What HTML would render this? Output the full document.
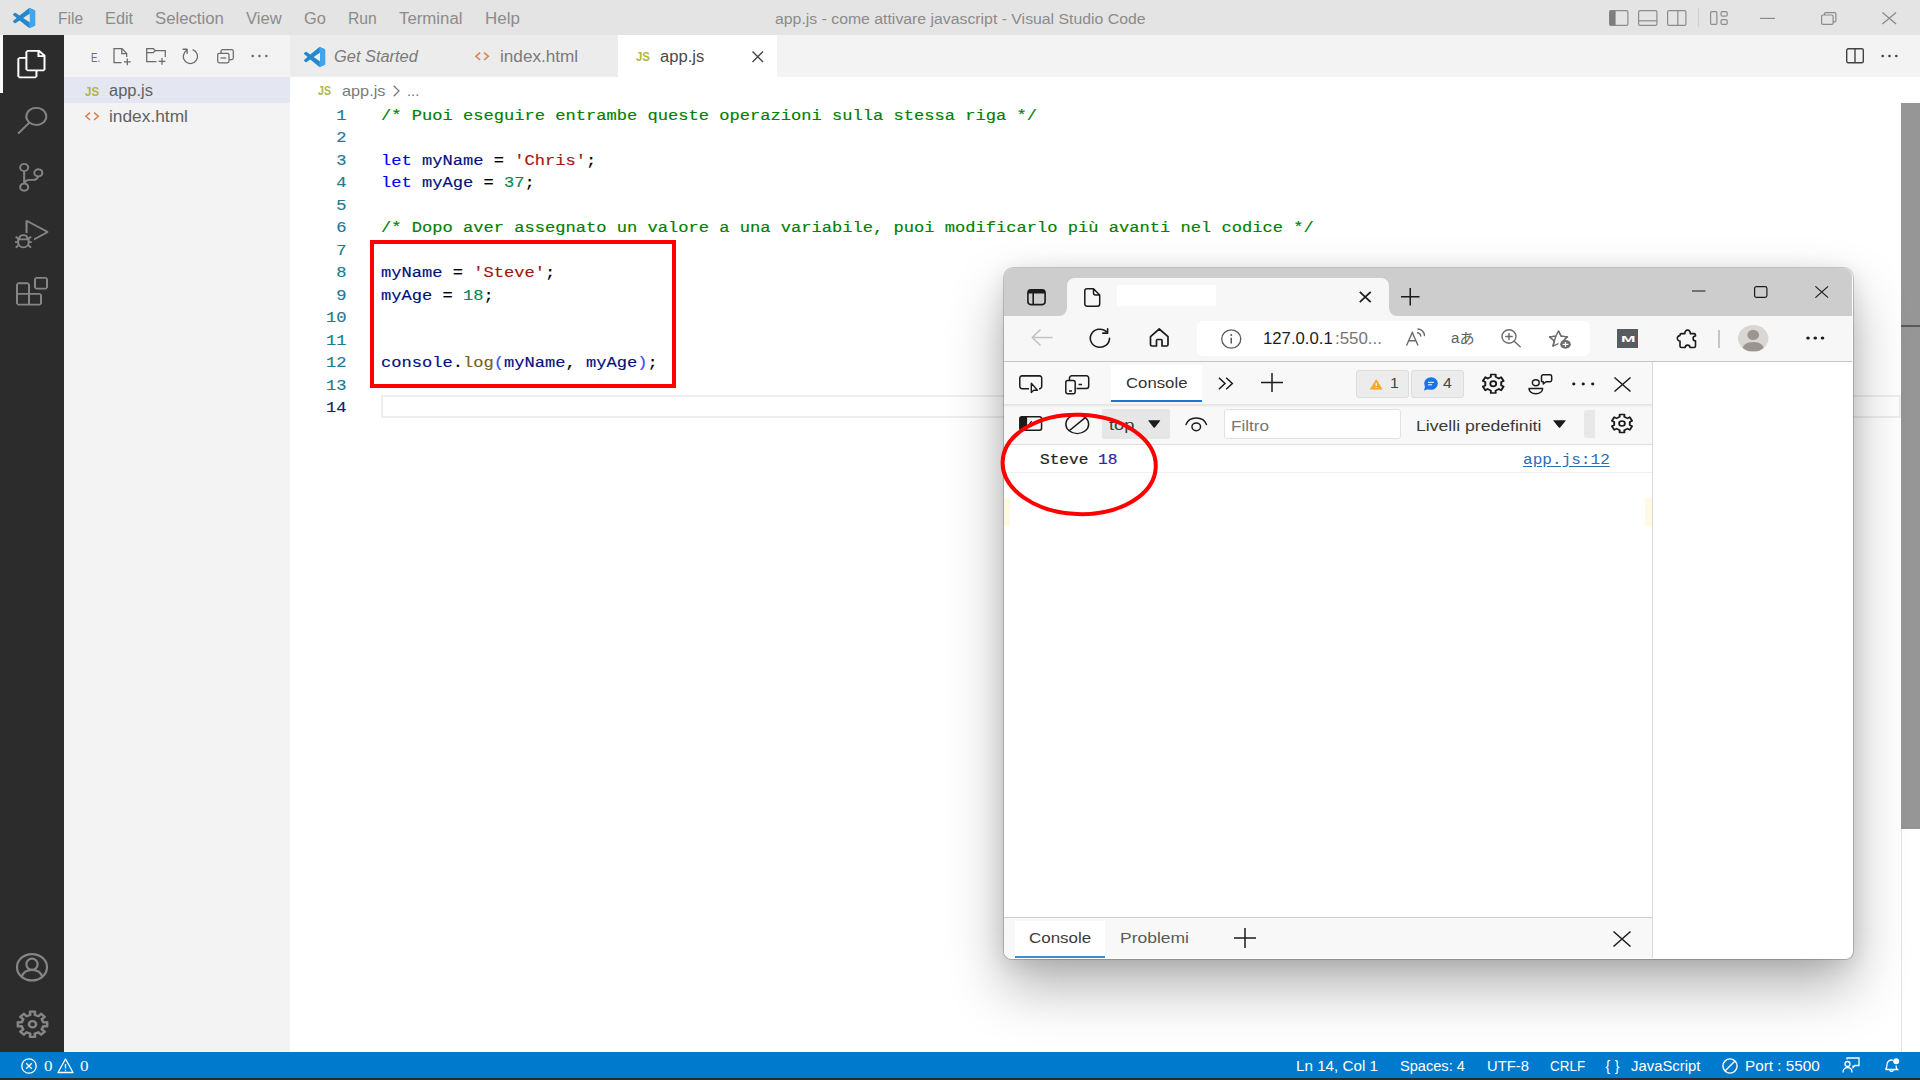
<!DOCTYPE html>
<html lang="it">
<head>
<meta charset="utf-8">
<title>app.js - come attivare javascript - Visual Studio Code</title>
<style>
*{box-sizing:border-box;margin:0;padding:0}
html,body{width:1920px;height:1080px;overflow:hidden;background:#fff}
body{position:relative;font-family:"Liberation Sans",sans-serif;color:#616161}
.abs{position:absolute}
.t{position:absolute;white-space:nowrap;line-height:1;transform-origin:0 50%}
svg{position:absolute;overflow:visible}
/* ---------- VS Code ---------- */
#titlebar{left:0;top:0;width:1920px;height:35px;background:#e4e4e4}
#titlebar .t{font-size:15.6px;color:#8b8b8b;top:10.7px}
#activity{left:0;top:35px;width:64px;height:1017px;background:#2c2c2c}
#sidebar{left:64px;top:35px;width:226px;height:1017px;background:#f3f3f3}
#tabs{left:290px;top:35px;width:1630px;height:42px;background:#f3f3f3}
#tabs:before{content:"";position:absolute;left:0;top:0;width:328px;height:42px;background:#f0f0f0}
.tab{position:absolute;top:0;height:42px;background:#ececec}
.tab.act{background:#fff}
#status{left:0;top:1052px;width:1920px;height:26px;background:#007acc}
#status .t{color:#fff;font-size:14px;top:7px}
#botstrip{left:0;top:1078px;width:1920px;height:2px;background:#2a2a2a}
/* code */
#code{left:290px;top:102.75px;width:1611px;height:950px}
.ln{position:absolute;margin-top:1.8px;-webkit-text-stroke:0.15px;left:0;width:56.5px;text-align:right;height:22.5px;line-height:22.5px;font-family:"Liberation Mono",monospace;font-size:14.5px;transform:scaleX(1.178);transform-origin:100% 50%;color:#237893;white-space:pre}
.cl{position:absolute;margin-top:1.8px;-webkit-text-stroke:0.15px;left:91px;height:22.5px;line-height:22.5px;font-family:"Liberation Mono",monospace;font-size:14.5px;transform:scaleX(1.178);transform-origin:0 50%;color:#000;white-space:pre}
.c{color:#008000}.k{color:#0000ff}.v{color:#001080}.s{color:#a31515}.n{color:#098658}.f{color:#795e26}.p{color:#2f55ee}
</style>
</head>
<body>
<!-- ================= TITLE BAR ================= -->
<div id="titlebar" class="abs">
  <span class="t" id="m1" style="left:57.6px;transform:scaleX(0.998)">File</span>
  <span class="t" id="m2" style="left:105.2px;transform:scaleX(1.046)">Edit</span>
  <span class="t" id="m3" style="left:155.2px;transform:scaleX(1.072)">Selection</span>
  <span class="t" id="m4" style="left:246.3px;transform:scaleX(1.065)">View</span>
  <span class="t" id="m5" style="left:303.7px;transform:scaleX(1.052)">Go</span>
  <span class="t" id="m6" style="left:348.0px;transform:scaleX(1.007)">Run</span>
  <span class="t" id="m7" style="left:398.8px;transform:scaleX(1.077)">Terminal</span>
  <span class="t" id="m8" style="left:484.8px;transform:scaleX(1.088)">Help</span>
  <span class="t" id="wtitle" style="left:774.5px;font-size:15.2px;transform:scaleX(1.041)">app.js - come attivare javascript - Visual Studio Code</span>
</div>
<!-- ================= ACTIVITY BAR ================= -->
<div id="activity" class="abs">
  <div class="abs" style="left:0;top:0;width:2.600px;height:57.500px;background:#fbfbfb"></div>
</div>
<!-- ================= SIDE BAR ================= -->
<div id="sidebar" class="abs">
  <div class="abs" style="left:0;top:42.300px;width:226px;height:25.500px;background:#e4e6f1"></div>
  <span class="t" id="sbE" style="left:27.2px;top:15.500px;font-size:13px;color:#6f6f6f;transform:scaleX(0.740)">E.</span>
  <span class="t" id="f1i" style="left:21.2px;top:49.8px;font-size:13.4px;font-weight:bold;color:#afb541;transform:scaleX(0.860)">JS</span>
  <span class="t" id="f1" style="left:45.0px;top:47.8px;font-size:15.6px;color:#616161;transform:scaleX(1.057)">app.js</span>
  <svg style="left:21.400px;top:77.300px;width:14.200px;height:8.600px" viewBox="0 0 14.5 9.5" preserveAspectRatio="none"><path d="M5.2 0.700L0.900 4.750L5.200 8.800M9.300 0.700L13.600 4.750L9.300 8.800" fill="none" stroke="#d9814f" stroke-width="1.600"/></svg>
  <span class="t" id="f2" style="left:45.0px;top:73.6px;font-size:15.6px;color:#616161;transform:scaleX(1.111)">index.html</span>
</div>
<!-- ================= TABS ================= -->
<div id="tabs" class="abs">
  <div class="tab" style="left:0;width:165.500px"></div>
  <div class="tab" style="left:166px;width:161.500px"></div>
  <div class="tab act" style="left:328px;width:159px"></div>
  <span class="t" id="tb1" style="left:43.7px;top:13.6px;font-size:16px;font-style:italic;color:#7a7a7a;transform:scaleX(1.025)">Get Started</span>
  <svg style="left:185px;top:16.600px;width:14.200px;height:8.600px" viewBox="0 0 14.5 9.5" preserveAspectRatio="none"><path d="M5.2 0.700L0.900 4.750L5.200 8.800M9.300 0.700L13.600 4.750L9.300 8.800" fill="none" stroke="#d9814f" stroke-width="1.600"/></svg>
  <span class="t" id="tb2" style="left:209.6px;top:13.6px;font-size:16px;color:#7a7a7a;transform:scaleX(1.072)">index.html</span>
  <span class="t" id="tb3i" style="left:346.0px;top:14.6px;font-size:13.4px;font-weight:bold;color:#afb541;transform:scaleX(0.854)">JS</span>
  <span class="t" id="tb3" style="left:369.8px;top:13.6px;font-size:16px;color:#4a4a4a;transform:scaleX(1.035)">app.js</span>
</div>
<!-- breadcrumb -->
<span class="t" id="bc1i" style="left:318.0px;top:85px;font-size:12.6px;font-weight:bold;color:#afb541;transform:scaleX(0.844)">JS</span>
<span class="t" id="bc1" style="left:341.6px;top:83.9px;font-size:14.8px;color:#7a7a7a;transform:scaleX(1.099)">app.js</span>
<span class="t" id="bc2" style="left:407px;top:83.9px;font-size:14.8px;color:#7a7a7a">...</span>
<!-- ================= CODE ================= -->
<div id="code" class="abs">
  <div class="abs" style="left:91px;top:292.5px;width:1520px;height:22.5px;border:2px solid #eeeeee"></div>
  <div class="ln" style="top:0">1</div><div class="cl" style="top:0"><span class="c">/* Puoi eseguire entrambe queste operazioni sulla stessa riga */</span></div>
  <div class="ln" style="top:22.5px">2</div>
  <div class="ln" style="top:45px">3</div><div class="cl" style="top:45px"><span class="k">let</span> <span class="v">myName</span> = <span class="s">'Chris'</span>;</div>
  <div class="ln" style="top:67.5px">4</div><div class="cl" style="top:67.5px"><span class="k">let</span> <span class="v">myAge</span> = <span class="n">37</span>;</div>
  <div class="ln" style="top:90px">5</div>
  <div class="ln" style="top:112.5px">6</div><div class="cl" style="top:112.5px"><span class="c">/* Dopo aver assegnato un valore a una variabile, puoi modificarlo più avanti nel codice */</span></div>
  <div class="ln" style="top:135px">7</div>
  <div class="ln" style="top:157.5px">8</div><div class="cl" style="top:157.5px"><span class="v">myName</span> = <span class="s">'Steve'</span>;</div>
  <div class="ln" style="top:180px">9</div><div class="cl" style="top:180px"><span class="v">myAge</span> = <span class="n">18</span>;</div>
  <div class="ln" style="top:202.5px">10</div>
  <div class="ln" style="top:225px">11</div>
  <div class="ln" style="top:247.5px">12</div><div class="cl" style="top:247.5px"><span class="v">console</span>.<span class="f">log</span><span class="p">(</span><span class="v">myName</span>, <span class="v">myAge</span><span class="p">)</span>;</div>
  <div class="ln" style="top:270px">13</div>
  <div class="ln" style="top:292.5px;color:#0b216f">14</div>
  <!-- red annotation box -->
  <div class="abs" style="left:80px;top:137.5px;width:306px;height:148px;border:4px solid #ff0000"></div>
</div>
<!-- scrollbar -->
<div class="abs" style="left:1901px;top:77px;width:19px;height:975px;background:#fff"></div>
<div class="abs" style="left:1901px;top:829px;width:1px;height:223px;background:#e4e4e4"></div>
<div class="abs" style="left:1901px;top:103px;width:19px;height:726px;background:#969696"></div>
<div class="abs" style="left:1901px;top:325px;width:19px;height:2px;background:#5a5a5a"></div>
<!-- ================= STATUS BAR ================= -->
<div id="status" class="abs">
  <span class="t" id="s1" style="left:43.7px;font-family:'Liberation Serif',serif;font-size:15.500px;top:6px;transform:scaleX(1.1)">0</span>
  <span class="t" id="s2" style="left:79.7px;font-family:'Liberation Serif',serif;font-size:15.500px;top:6px;transform:scaleX(1.1)">0</span>
  <span class="t" id="s3" style="left:1296.0px;transform:scaleX(1.086)">Ln 14, Col 1</span>
  <span class="t" id="s4" style="left:1400.3px;transform:scaleX(1.042)">Spaces: 4</span>
  <span class="t" id="s5" style="left:1486.9px;transform:scaleX(1.056)">UTF-8</span>
  <span class="t" id="s6" style="left:1549.8px;transform:scaleX(0.960)">CRLF</span>
  <span class="t" id="s7" style="left:1605.5px;letter-spacing:4.5px">{}</span>
  <span class="t" id="s8" style="left:1630.6px;transform:scaleX(1.062)">JavaScript</span>
  <span class="t" id="s9" style="left:1744.7px;transform:scaleX(1.093)">Port : 5500</span>
</div>
<div id="botstrip" class="abs"></div>
<!-- ICONS-VSCODE -->
<!-- VS Code logo (title bar + tab) -->
<svg style="left:12.5px;top:8px;width:22.5px;height:20px" viewBox="0 0 24 24" preserveAspectRatio="none"><defs><clipPath id="lg1"><path d="M23.15 2.587L18.21.21a1.494 1.494 0 0 0-1.705.29l-9.46 8.63-4.12-3.128a.999.999 0 0 0-1.276.057L.327 7.261A1 1 0 0 0 .326 8.74L3.899 12 .326 15.26a1 1 0 0 0 .001 1.479L1.65 17.94a.999.999 0 0 0 1.276.057l4.12-3.128 9.46 8.630a1.492 1.492 0 0 0 1.704.29l4.942-2.377A1.500 1.500 0 0 0 24 20.060V3.939a1.500 1.500 0 0 0-.85-1.352zm-5.146 14.861L10.826 12l7.178-5.448v10.896z"/></clipPath></defs><g clip-path="url(#lg1)"><rect width="24" height="24" fill="#2488cc"/><path d="M0 0H9L18 6.500L10.800 12L18 17.500L9 24H0Z" fill="#2b93d8" opacity="0"/><rect x="17.200" width="7" height="24" fill="#3fa5ee"/></g></svg>
<svg style="left:303.5px;top:46.5px;width:21.5px;height:20px" viewBox="0 0 24 24" preserveAspectRatio="none"><defs><clipPath id="lg2"><path d="M23.15 2.587L18.21.21a1.494 1.494 0 0 0-1.705.29l-9.46 8.63-4.12-3.128a.999.999 0 0 0-1.276.057L.327 7.261A1 1 0 0 0 .326 8.74L3.899 12 .326 15.26a1 1 0 0 0 .001 1.479L1.65 17.94a.999.999 0 0 0 1.276.057l4.12-3.128 9.46 8.630a1.492 1.492 0 0 0 1.704.29l4.942-2.377A1.500 1.500 0 0 0 24 20.060V3.939a1.500 1.500 0 0 0-.85-1.352zm-5.146 14.861L10.826 12l7.178-5.448v10.896z"/></clipPath></defs><g clip-path="url(#lg2)"><rect width="24" height="24" fill="#2488cc"/><path d="M0 0H9L18 6.500L10.800 12L18 17.500L9 24H0Z" fill="#2b93d8" opacity="0"/><rect x="17.200" width="7" height="24" fill="#3fa5ee"/></g></svg>
<!-- activity bar icons -->
<svg style="left:15.700px;top:49.600px;width:32.200px;height:28.200px" viewBox="0 0 24 24" preserveAspectRatio="none"><path fill="#ffffff" d="M17.5 0h-9L7 1.5V6H2.5L1 7.5v15.07L2.5 24h12.07L16 22.57V18h4.7l1.3-1.43V4.5L17.5 0zm0 2.12l2.38 2.38H17.5V2.12zm-3 20.38h-12v-15H7v9.07L8.5 18h6v4.5zm6-6h-12v-15H16V6h4.5v10.5z"/></svg>
<svg style="left:16.200px;top:106.700px;width:32px;height:27.300px" viewBox="0 0 24 24" preserveAspectRatio="none"><path fill="#858585" d="M15.25 0a8.25 8.25 0 0 0-6.18 13.72L1 22.88l1.12 1 8.05-9.12A8.251 8.251 0 1 0 15.25.01V0zm0 15a6.75 6.75 0 1 1 0-13.5 6.75 6.75 0 0 1 0 13.5z"/></svg>
<svg style="left:15.200px;top:163px;width:32.400px;height:28.700px" viewBox="0 0 24 24" preserveAspectRatio="none"><path fill="#858585" d="M21.007 8.222A3.738 3.738 0 0 0 15.045 5.2a3.737 3.737 0 0 0 1.156 6.583 2.988 2.988 0 0 1-2.668 1.67h-2.99a4.456 4.456 0 0 0-2.989 1.165V7.4a3.737 3.737 0 1 0-1.494 0v9.117a3.776 3.776 0 1 0 1.816.099 2.99 2.99 0 0 1 2.668-1.667h2.99a4.484 4.484 0 0 0 4.223-3.039 3.736 3.736 0 0 0 3.25-3.687zM4.565 3.738a2.242 2.242 0 1 1 4.484 0 2.242 2.242 0 0 1-4.484 0zm4.484 16.441a2.242 2.242 0 1 1-4.484 0 2.242 2.242 0 0 1 4.484 0zm8.221-9.715a2.242 2.242 0 1 1 0-4.485 2.242 2.242 0 0 1 0 4.485z"/></svg>
<svg style="left:15px;top:220px;width:33.600px;height:28.300px" viewBox="0 0 24 24" preserveAspectRatio="none"><path fill="#858585" d="M10.94 13.5l-1.32 1.32a3.73 3.73 0 0 0-7.24 0L1.06 13.5 0 14.56l1.72 1.72-.22.22V18H0v1.5h1.5v.08c.077.489.214.966.41 1.42L0 22.94 1.06 24l1.65-1.65A4.308 4.308 0 0 0 6 24a4.31 4.31 0 0 0 3.29-1.65L10.94 24 12 22.94 10.09 21c.198-.464.336-.951.41-1.45v-.1H12V18h-1.5v-1.5l-.22-.22L12 14.56l-1.06-1.06zM6 13.5a2.25 2.25 0 0 1 2.25 2.25h-4.5A2.25 2.25 0 0 1 6 13.5zm3 6a3.33 3.33 0 0 1-3 3 3.33 3.33 0 0 1-3-3v-2.25h6v2.25zm14.76-9.9v1.26L13.5 17.37V15.6l8.5-5.37L9 2v9.46a5.07 5.07 0 0 0-1.5-.72V.63L8.64 0l15.12 9.6z"/></svg>
<svg style="left:16px;top:276.5px;width:32px;height:28.5px" viewBox="0 0 24 24" preserveAspectRatio="none"><path fill="#858585" d="M13.5 1.5L15 0h7.5L24 1.5V9l-1.5 1.5H15L13.5 9V1.5zm1.5 0V9h7.5V1.5H15zM0 15V6l1.5-1.5H9L10.5 6v7.5H18l1.5 1.5v7.5L18 24H1.5L0 22.5V15zm9-1.5V6H1.5v7.5H9zM9 15H1.5v7.5H9V15zm1.5 7.500H18V15h-7.5v7.5z"/></svg>
<!-- account -->
<svg style="left:16px;top:953px;width:32px;height:28.5px" viewBox="0 0 32 28.5"><g fill="none" stroke="#858585" stroke-width="2.200"><ellipse cx="16" cy="14.25" rx="15" ry="13.2"/><circle cx="16" cy="11.2" r="5.6"/><path d="M5.6 23.6c1.6-4.4 5.6-6.8 10.400-6.800s8.800 2.400 10.400 6.800"/></g></svg>
<!-- gear -->
<svg style="left:15.5px;top:1010px;width:33px;height:28.5px" viewBox="0 0 24 24" preserveAspectRatio="none"><g fill="none" stroke="#858585" stroke-width="1.900" stroke-linejoin="round"><path d="M19.82 10.32 L22.64 10.18 L22.64 13.82 L19.82 13.68 L18.72 16.34 L20.82 18.24 L18.24 20.82 L16.34 18.72 L13.68 19.82 L13.82 22.64 L10.18 22.64 L10.32 19.82 L7.66 18.72 L5.76 20.82 L3.18 18.24 L5.28 16.34 L4.18 13.68 L1.36 13.82 L1.36 10.18 L4.18 10.32 L5.28 7.66 L3.18 5.76 L5.76 3.18 L7.66 5.28 L10.32 4.18 L10.18 1.36 L13.82 1.36 L13.68 4.18 L16.34 5.28 L18.24 3.18 L20.82 5.76 L18.72 7.66Z"/><circle cx="12" cy="12" r="2.6"/></g></svg>
<!-- title bar right icons -->
<svg style="left:1609px;top:10px;width:19.5px;height:16px" viewBox="0 0 19.5 16"><rect x="0.6" y="0.6" width="18.3" height="14.8" rx="1.5" fill="none" stroke="#8b8b8b" stroke-width="1.2"/><rect x="0.6" y="0.6" width="6" height="14.800" fill="#7d7d7d"/></svg>
<svg style="left:1638px;top:10px;width:19.5px;height:16px" viewBox="0 0 19.5 16"><rect x="0.6" y="0.6" width="18.3" height="14.8" rx="1.5" fill="none" stroke="#8b8b8b" stroke-width="1.2"/><path d="M0.6 10.8H18.9" stroke="#8b8b8b" stroke-width="1.2"/></svg>
<svg style="left:1667px;top:10px;width:19.5px;height:16px" viewBox="0 0 19.5 16"><rect x="0.6" y="0.6" width="18.3" height="14.8" rx="1.5" fill="none" stroke="#8b8b8b" stroke-width="1.2"/><path d="M10.8 0.6V15.4" stroke="#8b8b8b" stroke-width="1.2"/></svg>
<div class="abs" style="left:1698px;top:8px;width:1px;height:19px;background:#cfcfcf"></div>
<svg style="left:1710px;top:11px;width:18px;height:14px" viewBox="0 0 18 14"><g fill="none" stroke="#8b8b8b" stroke-width="1.2"><rect x="0.6" y="0.6" width="6.3" height="12.8" rx="1.2"/><rect x="11" y="0.6" width="6.2" height="4.6" rx="1.5"/><rect x="11" y="8.6" width="6.2" height="4.800" rx="1.5"/></g></svg>
<svg style="left:1759.5px;top:12px;width:15px;height:13px" viewBox="0 0 15 13"><path d="M0 6.400H15" stroke="#8b8b8b" stroke-width="1.2"/></svg>
<svg style="left:1820.500px;top:12px;width:15.5px;height:13px" viewBox="0 0 15.5 13"><g fill="none" stroke="#8b8b8b" stroke-width="1.2"><rect x="0.6" y="3" width="11.500" height="9.400" rx="1.2"/><path d="M3.4 3V1.800a1.200 1.200 0 0 1 1.200-1.200H13.700a1.200 1.200 0 0 1 1.200 1.200V8.600a1.200 1.200 0 0 1-1.200 1.200H12.100"/></g></svg>
<svg style="left:1882px;top:12px;width:14.5px;height:12.5px" viewBox="0 0 14.5 12.5" preserveAspectRatio="none"><path d="M0.400 0.400L14.100 12.100M14.100 0.400L0.400 12.100" stroke="#8b8b8b" stroke-width="1.3"/></svg>
<!-- editor actions -->
<svg style="left:1846px;top:47.500px;width:18px;height:15.500px" viewBox="0 0 18 15.500"><rect x="0.700" y="0.700" width="16.600" height="14.100" rx="1.500" fill="none" stroke="#424242" stroke-width="1.400"/><path d="M9 0.700V14.800" stroke="#424242" stroke-width="1.400"/></svg>
<svg style="left:1880.500px;top:54px;width:17px;height:4px" viewBox="0 0 17 4"><g fill="#424242"><circle cx="1.700" cy="2" r="1.300"/><circle cx="8.500" cy="2" r="1.300"/><circle cx="15.300" cy="2" r="1.300"/></g></svg>
<!-- tab close -->
<svg style="left:751.500px;top:50.500px;width:11.500px;height:11.500px" viewBox="0 0 11.500 11.500"><path d="M0.500 0.500L11 11M11 0.500L0.500 11" stroke="#424242" stroke-width="1.400"/></svg>
<!-- breadcrumb chevron -->
<svg style="left:393px;top:85px;width:7px;height:12px" viewBox="0 0 7 12"><path d="M0.700 0.700L6 6L0.700 11.300" fill="none" stroke="#7a7a7a" stroke-width="1.300"/></svg>
<!-- sidebar header icons -->
<svg style="left:113px;top:48px;width:19px;height:17.500px" viewBox="0 0 19 17.500"><g fill="none" stroke="#6a6a6a" stroke-width="1.250"><path d="M8.500 14.500H1V0.700H9L13.700 5.400V9"/><path d="M8.800 0.800V5.600H13.600"/><path d="M14.300 10.500V17.300M10.900 13.900H17.700"/></g></svg>
<svg style="left:145.500px;top:48px;width:21px;height:17px" viewBox="0 0 21 17"><g fill="none" stroke="#6a6a6a" stroke-width="1.250"><path d="M10.500 13.500H0.700V0.700H7.500L9.300 2.600H19.300V9"/><path d="M0.700 4.700H7.300L9.300 2.600"/><path d="M16 10V16.800M12.600 13.400H19.400"/></g></svg>
<svg style="left:180px;top:46.300px;width:20.800px;height:20.800px" viewBox="0 0 16 16"><path fill="#6a6a6a" d="M4.681 3H2V2h3.5l.5.5V6H5V4a5 5 0 1 0 4.530-.761l.302-.954A6 6 0 1 1 4.681 3z"/></svg>
<svg style="left:216.500px;top:49px;width:17px;height:14.500px" viewBox="0 0 17 14.500"><g fill="none" stroke="#6a6a6a" stroke-width="1.250"><rect x="0.700" y="4.300" width="11.300" height="9.500" rx="1.500"/><path d="M4 4V2.200a1.500 1.500 0 0 1 1.500-1.500H14.800a1.500 1.500 0 0 1 1.500 1.500V9a1.500 1.500 0 0 1-1.500 1.500H12.300"/><path d="M3.500 9H9.200"/></g></svg>
<svg style="left:251px;top:54px;width:17px;height:4px" viewBox="0 0 17 4"><g fill="#6a6a6a"><circle cx="1.700" cy="2" r="1.250"/><circle cx="8.500" cy="2" r="1.250"/><circle cx="15.300" cy="2" r="1.250"/></g></svg>
<!-- status bar icons -->
<svg style="left:21px;top:1057.500px;width:16px;height:16px" viewBox="0 0 16 16"><g fill="none" stroke="#fff" stroke-width="1.300"><circle cx="8" cy="8" r="7.200"/><path d="M5.200 5.200L10.800 10.800M10.800 5.200L5.200 10.800"/></g></svg>
<svg style="left:56.500px;top:1057.500px;width:17px;height:15.500px" viewBox="0 0 17 15.500"><g fill="none" stroke="#fff" stroke-width="1.300" stroke-linejoin="round"><path d="M8.500 1L16 14.500H1Z"/><path d="M8.500 6V10.500M8.500 11.800V13.200"/></g></svg>
<svg style="left:1722px;top:1057.500px;width:16px;height:16px" viewBox="0 0 16 16"><g fill="none" stroke="#fff" stroke-width="1.400"><circle cx="8" cy="8" r="7.100"/><path d="M3 13L13 3"/></g></svg>
<svg style="left:1842px;top:1057px;width:18px;height:16px" viewBox="0 0 18 16"><g fill="none" stroke="#fff" stroke-width="1.300"><circle cx="5.500" cy="7" r="2.500"/><path d="M1 15.500c0-3.200 2-4.800 4.500-4.800s4.500 1.600 4.500 4.800"/><path d="M5 2.500V1H17V8.500H13L11 10.500V8.500"/></g></svg>
<svg style="left:1883px;top:1056.500px;width:17px;height:17px" viewBox="0 0 17 17"><g fill="none" stroke="#fff" stroke-width="1.300"><path d="M2.500 12.500c1.200-1.200 1.500-2.500 1.500-5a4.500 4.500 0 0 1 6-4.200M13 8.500c0 1.800.5 3 1.500 4H2.500"/><path d="M6.800 13a1.800 1.800 0 0 0 3.500 0"/></g><circle cx="13.200" cy="4.200" r="3" fill="#fff"/></svg>
<!-- /ICONS-VSCODE -->
<!-- BROWSER -->
<!-- window shadow + border -->
<div class="abs" style="left:1003.5px;top:267.5px;width:849px;height:691px;border-radius:9.500px 9.500px 7.500px 7.500px;box-shadow:0 0 0 1px rgba(0,0,0,.19),0 28px 56px rgba(0,0,0,.30),0 4px 22px rgba(0,0,0,.11);background:#fff"></div>
<div id="bw" class="abs" style="left:0;top:0;width:1920px;height:1080px;clip-path:inset(268px 68px 122px 1004px round 9px 9px 7px 7px)">
  <!-- frame / title bar -->
  <div class="abs" style="left:1004px;top:268px;width:848px;height:48px;background:#cdcdcd"></div>
  <!-- active tab -->
  <div class="abs" style="left:1066.500px;top:278.300px;width:322px;height:38px;background:#f7f7f7;border-radius:8px 8px 0 0"></div>
  <svg style="left:1058.500px;top:308px;width:8px;height:8px" viewBox="0 0 8 8"><path d="M8 0V8H0A8 8 0 0 0 8 0Z" fill="#f7f7f7"/></svg>
  <svg style="left:1388.500px;top:308px;width:8px;height:8px" viewBox="0 0 8 8"><path d="M0 0V8H8A8 8 0 0 1 0 0Z" fill="#f7f7f7"/></svg>
  <!-- toolbar -->
  <div class="abs" style="left:1004px;top:316px;width:848px;height:45px;background:#f7f7f7"></div>
  <div class="abs" style="left:1004px;top:361px;width:848px;height:1px;background:#c4c4c4"></div>
  <!-- address bar -->
  <div class="abs" style="left:1196.500px;top:320.800px;width:393px;height:35.200px;background:#fff;border-radius:6px"></div>
  <!-- page -->
  <div class="abs" style="left:1004px;top:362px;width:848px;height:596px;background:#fff"></div>
  <!-- devtools rows -->
  <div class="abs" style="left:1004px;top:362px;width:648px;height:43px;background:#f8f8f8;border-bottom:1px solid #e3e3e3"></div>
  <div class="abs" style="left:1004px;top:405px;width:648px;height:40px;background:#f8f8f8;border-bottom:1px solid #dddddd;box-shadow:inset 0 2px 2px -1px rgba(0,0,0,.08)"></div>
  <div class="abs" style="left:1004px;top:471.500px;width:648px;height:1px;background:#f0f0f0"></div>
  <div class="abs" style="left:1004px;top:498px;width:6px;height:28px;background:#fffbe3"></div>
  <div class="abs" style="left:1645px;top:498px;width:7px;height:28px;background:#fffbe3"></div>
  <div class="abs" style="left:1652px;top:362px;width:1px;height:596px;background:#dadada"></div>
  <!-- drawer -->
  <div class="abs" style="left:1004px;top:916.500px;width:648px;height:42px;background:#f8f8f8;border-top:1px solid #cdcdcd"></div>
  <div class="abs" style="left:1014.500px;top:920.500px;width:90.500px;height:38px;background:#fff"></div>
  <div class="abs" style="left:1014.500px;top:956px;width:90.500px;height:2px;background:#3a8dd6"></div>
  <!-- console tab -->
  <div class="abs" style="left:1111px;top:365px;width:91px;height:36.500px;background:#fff"></div>
  <div class="abs" style="left:1111px;top:399.500px;width:91px;height:2px;background:#1976d2"></div>
  <!-- top selector / filter / misc boxes -->
  <div class="abs" style="left:1101.500px;top:408.500px;width:68.500px;height:30.500px;background:#e6e6e6;border-radius:2px"></div>
  <div class="abs" style="left:1223.500px;top:408.500px;width:177.500px;height:30.500px;background:#fff;border:1px solid #e2e2e2;border-radius:3px"></div>
  <div class="abs" style="left:1583.500px;top:409.500px;width:11.500px;height:28.500px;background:#e8e8e8;border-radius:3px 0 0 3px"></div>
  <div class="abs" style="left:1356px;top:370px;width:52.500px;height:27.500px;background:#ececec;border:1px solid #dcdcdc;border-radius:3px"></div>
  <div class="abs" style="left:1411px;top:370px;width:52.500px;height:27.500px;background:#ececec;border:1px solid #dcdcdc;border-radius:3px"></div>
  <!-- redacted tab title -->
  <div class="abs" style="left:1116.500px;top:284.500px;width:99px;height:21.500px;background:#fff"></div>

  <!-- ===== text ===== -->
  <span class="t" id="url1" style="left:1263.0px;top:329.500px;font-size:17px;color:#1b1b1b;transform:scaleX(0.983)">127.0.0.1</span>
  <span class="t" id="url2" style="left:1334.6px;top:329.500px;font-size:17px;color:#767676;transform:scaleX(0.992)">:550...</span>
  <span class="t" id="trA" style="left:1451.0px;top:331px;font-size:14px;color:#5c5c5c;font-family:'Liberation Sans','Noto Sans CJK JP',sans-serif;transform:scaleX(1.078)">aあ</span>
  <span class="t" id="dtc" style="left:1125.8px;top:376.1px;font-size:14.4px;color:#333;transform:scaleX(1.164)">Console</span>
  <span class="t" id="w1" style="left:1390.0px;top:376.1px;font-size:14.4px;color:#444;transform:scaleX(1.1)">1</span>
  <span class="t" id="w4" style="left:1443.4px;top:376.1px;font-size:14.4px;color:#444;transform:scaleX(1.1)">4</span>
  <span class="t" id="top" style="left:1108.6px;top:417.4px;font-size:15px;color:#3a3a3a;transform:scaleX(1.218)">top</span>
  <span class="t" id="flt" style="left:1231.0px;top:417.7px;font-size:15px;color:#767676;transform:scaleX(1.140)">Filtro</span>
  <span class="t" id="lvl" style="left:1416.0px;top:417.5px;font-size:15px;color:#3a3a3a;transform:scaleX(1.175)">Livelli predefiniti</span>
  <span class="t" id="log1" style="left:1039.5px;top:452.6px;font-family:'Liberation Mono',monospace;font-size:14.300px;color:#222;-webkit-text-stroke:0.2px;transform:scaleX(1.127)">Steve <span style="color:#2a2a9c">18</span></span>
  <span class="t" id="log2" style="left:1522.5px;top:452.6px;font-family:'Liberation Mono',monospace;font-size:14.300px;color:#2a6db3;text-decoration:underline;text-underline-offset:2px;transform:scaleX(1.124)">app.js:12</span>
  <span class="t" id="dr1" style="left:1028.9px;top:931.1px;font-size:14.4px;color:#3a3a3a;transform:scaleX(1.176)">Console</span>
  <span class="t" id="dr2" style="left:1120.0px;top:931.1px;font-size:14.4px;color:#5a5a5a;transform:scaleX(1.215)">Problemi</span>
  <span class="t" id="mm" style="left:1620.5px;top:334px;font-size:9.600px;font-weight:bold;color:#fff;z-index:2;transform:scaleX(1.812)">M</span>

  <!-- ===== icons: title/tab strip ===== -->
  <svg style="left:1027px;top:288.500px;width:19px;height:16.500px" viewBox="0 0 19 16.500" preserveAspectRatio="none"><rect x="0.900" y="0.900" width="17.200" height="14.700" rx="3" fill="none" stroke="#1b1b1b" stroke-width="1.600"/><path d="M0.900 4.200V3.900a3 3 0 0 1 3-3H15.100a3 3 0 0 1 3 3V4.600H0.900Z" fill="#1b1b1b"/><path d="M6.200 4V15.600" stroke="#1b1b1b" stroke-width="1.600"/></svg>
  <svg style="left:1083.500px;top:287.500px;width:16.500px;height:19px" viewBox="0 0 16.500 19" preserveAspectRatio="none"><path d="M9.500 0.800H3a2.200 2.200 0 0 0-2.200 2.200V16a2.200 2.200 0 0 0 2.200 2.200H13.500a2.200 2.200 0 0 0 2.200-2.200V7Z M9.500 0.800V5a2 2 0 0 0 2 2H15.700" fill="none" stroke="#1b1b1b" stroke-width="1.500" stroke-linejoin="round"/></svg>
  <svg style="left:1358.500px;top:291px;width:12.500px;height:12px" viewBox="0 0 12.500 12" preserveAspectRatio="none"><path d="M0.800 0.800L11.700 11.200M11.700 0.800L0.800 11.200" stroke="#1b1b1b" stroke-width="1.700"/></svg>
  <svg style="left:1401px;top:288px;width:18.500px;height:17.500px" viewBox="0 0 18.500 17.500" preserveAspectRatio="none"><path d="M9.250 0V17.500M0 8.750H18.500" stroke="#1b1b1b" stroke-width="1.500"/></svg>
  <!-- window controls -->
  <svg style="left:1692px;top:290px;width:13.500px;height:2px" viewBox="0 0 13.500 2" preserveAspectRatio="none"><path d="M0 1H13.500" stroke="#1b1b1b" stroke-width="1.200"/></svg>
  <svg style="left:1753.500px;top:285.500px;width:13.500px;height:12px" viewBox="0 0 13.500 12" preserveAspectRatio="none"><rect x="0.600" y="0.600" width="12.300" height="10.800" rx="1.800" fill="none" stroke="#1b1b1b" stroke-width="1.200"/></svg>
  <svg style="left:1815px;top:285.500px;width:13.500px;height:12px" viewBox="0 0 13.500 12" preserveAspectRatio="none"><path d="M0.400 0.400L13.100 11.600M13.100 0.400L0.400 11.600" stroke="#1b1b1b" stroke-width="1.200"/></svg>
  <!-- ===== icons: toolbar ===== -->
  <svg style="left:1031px;top:329px;width:21.500px;height:17px" viewBox="0 0 21.500 17" preserveAspectRatio="none"><path d="M21 8.500H1.500M9 1L1.200 8.500L9 16" fill="none" stroke="#c2c2c2" stroke-width="1.600" stroke-linecap="round" stroke-linejoin="round"/></svg>
  <svg style="left:1089px;top:328px;width:22.500px;height:20.400px" viewBox="0 0 22.500 21" preserveAspectRatio="none"><path d="M20.500 10.500A9.600 9.300 0 1 1 17.200 3.500" fill="none" stroke="#1b1b1b" stroke-width="1.600" stroke-linecap="round"/><path d="M18.600 0.800V5.300H13.800" fill="none" stroke="#1b1b1b" stroke-width="1.600" stroke-linecap="round" stroke-linejoin="round"/></svg>
  <svg style="left:1148.500px;top:328px;width:20.500px;height:19px" viewBox="0 0 20.500 19" preserveAspectRatio="none"><path d="M1.500 8.700L10.250 1L19 8.700V16.500a1.500 1.500 0 0 1-1.500 1.500H13V12.500a1 1 0 0 0-1-1H8.500a1 1 0 0 0-1 1V18H3a1.500 1.500 0 0 1-1.500-1.500Z" fill="none" stroke="#1b1b1b" stroke-width="1.700" stroke-linejoin="round"/></svg>
  <svg style="left:1220.500px;top:328.500px;width:20.500px;height:20px" viewBox="0 0 20.500 20" preserveAspectRatio="none"><ellipse cx="10.250" cy="10" rx="9.500" ry="9.200" fill="none" stroke="#5a5a5a" stroke-width="1.300"/><path d="M10.250 8.800V14.500" stroke="#5a5a5a" stroke-width="1.500"/><circle cx="10.250" cy="6" r="1" fill="#5a5a5a"/></svg>
  <!-- read aloud -->
  <svg style="left:1405.500px;top:328px;width:20px;height:18px" viewBox="0 0 20 18" preserveAspectRatio="none"><g fill="none" stroke="#6a6a6a" stroke-width="1.400" stroke-linecap="round"><path d="M0.800 17L6.300 4.500L11.800 17M2.800 12.700H9.800"/><path d="M11.500 4.700a4 4 0 0 1 3.300 3.300M12 1a7.500 7.500 0 0 1 6.500 6.500"/></g></svg>
  <!-- zoom -->
  <svg style="left:1501px;top:329px;width:20px;height:18.500px" viewBox="0 0 20 18.500" preserveAspectRatio="none"><g fill="none" stroke="#6a6a6a" stroke-width="1.400" stroke-linecap="round"><ellipse cx="8" cy="7.500" rx="7" ry="6.700"/><path d="M13.200 12.300L19.200 17.800M8 4.500V10.500M4.800 7.500H11.200"/></g></svg>
  <!-- favourite star + -->
  <svg style="left:1548px;top:329.500px;width:23.500px;height:19px" viewBox="0 0 23.500 21" preserveAspectRatio="none"><path d="M10.500 1.200L13.200 6.800L19.500 7.600L15 12L16 17.500M5 17.800L6.200 12L1.500 7.600L7.800 6.800Z" fill="none" stroke="#6a6a6a" stroke-width="1.400" stroke-linejoin="round" stroke-linecap="round"/><path d="M6.200 12L1.500 7.600L7.800 6.800L10.500 1.200L13.200 6.800L19.500 7.600L16.500 10.500M5 17.800L6.200 12M5 17.800L10 15.200" fill="none" stroke="#6a6a6a" stroke-width="1.400" stroke-linejoin="round" stroke-linecap="round"/><ellipse cx="17.500" cy="15.800" rx="5.300" ry="4.800" fill="#6a6a6a"/><path d="M17.500 13.200V18.400M14.600 15.800H20.400" stroke="#fff" stroke-width="1.300"/></svg>
  <!-- M extension -->
  <div class="abs" style="left:1616.500px;top:329px;width:21.500px;height:19px;background:#565c5f"></div>
  <!-- puzzle -->
  <svg style="left:1676.500px;top:329px;width:19.500px;height:19px" viewBox="0 0 19.500 19" preserveAspectRatio="none"><path d="M5 4.600H8a2.700 2.700 0 1 1 5.200 0H17q1.500 0 1.500 1.500V7a2.400 2.400 0 1 0 0 4.800V17q0 1.500-1.500 1.500H13a2.400 2.400 0 1 0-4.800 0H4.500q-1.500 0-1.500-1.500V12a2.700 2.700 0 1 1 0-5.400V6.100q0-1.500 1.500-1.500Z" fill="none" stroke="#1b1b1b" stroke-width="1.600" stroke-linejoin="round"/></svg>
  <div class="abs" style="left:1718px;top:329.500px;width:1.500px;height:18.500px;background:#c6c6c6"></div>
  <!-- avatar -->
  <svg style="left:1738.200px;top:325px;width:30.400px;height:26.600px" viewBox="0 0 30 28" preserveAspectRatio="none"><defs><clipPath id="avc"><ellipse cx="15" cy="14" rx="15" ry="14"/></clipPath></defs><ellipse cx="15" cy="14" rx="15" ry="14" fill="#d9d6d4"/><g clip-path="url(#avc)" fill="#9b9592"><ellipse cx="15" cy="10.500" rx="5.800" ry="5.400"/><path d="M4 28c0-7 4.500-10 11-10s11 3 11 10Z"/></g></svg>
  <svg style="left:1805.500px;top:336px;width:18.500px;height:4px" viewBox="0 0 18.500 4" preserveAspectRatio="none"><g fill="#1b1b1b"><ellipse cx="2" cy="2" rx="1.800" ry="1.600"/><ellipse cx="9.250" cy="2" rx="1.800" ry="1.600"/><ellipse cx="16.500" cy="2" rx="1.800" ry="1.600"/></g></svg>
  <!-- ===== icons: devtools row 1 ===== -->
  <svg style="left:1019px;top:375.400px;width:23.500px;height:18.200px" viewBox="0 0 23.500 17" preserveAspectRatio="none"><path d="M10 12.800H3a2.200 2.200 0 0 1-2.200-2.200V3a2.200 2.200 0 0 1 2.200-2.200H20.500a2.200 2.200 0 0 1 2.200 2.200V10.600a2.200 2.200 0 0 1-2.200 2.200H20" fill="none" stroke="#1b1b1b" stroke-width="1.500"/><path d="M12.300 7.800V16.300L14.700 14.300H18.500Z" fill="none" stroke="#1b1b1b" stroke-width="1.400" stroke-linejoin="round"/></svg>
  <svg style="left:1065px;top:374.500px;width:24.500px;height:19.500px" viewBox="0 0 24.500 19.500" preserveAspectRatio="none"><g fill="none" stroke="#1b1b1b" stroke-width="1.500"><path d="M4.500 5.500V3a2.200 2.200 0 0 1 2.200-2.200H21.500a2.200 2.200 0 0 1 2.200 2.200V11.300a2.200 2.200 0 0 1-2.200 2.200H11.500"/><rect x="0.800" y="5.600" width="9.400" height="13.100" rx="2"/><path d="M4 16H7M13.500 9.500H17"/></g></svg>
  <svg style="left:1218px;top:376.500px;width:15.500px;height:13px" viewBox="0 0 15.500 13" preserveAspectRatio="none"><path d="M0.900 0.800L7 6.500L0.900 12.200M8.200 0.800L14.300 6.500L8.200 12.200" fill="none" stroke="#1b1b1b" stroke-width="1.500"/></svg>
  <svg style="left:1261px;top:372.500px;width:22px;height:19px" viewBox="0 0 22 19" preserveAspectRatio="none"><path d="M11 0V19M0 9.500H22" stroke="#1b1b1b" stroke-width="1.500"/></svg>
  <svg style="left:1369.500px;top:379px;width:12.500px;height:10.500px" viewBox="0 0 12.500 10.500" preserveAspectRatio="none"><path d="M6.250 0.500L12.200 10.200H0.300Z" fill="#f6a828" stroke="#f6a828" stroke-width="0.600" stroke-linejoin="round"/><path d="M6.250 4V7M6.250 8V9" stroke="#fff" stroke-width="1.200"/></svg>
  <svg style="left:1422.500px;top:377px;width:15px;height:14px" viewBox="0 0 15 14" preserveAspectRatio="none"><ellipse cx="8" cy="6.500" rx="6.800" ry="6.300" fill="#1a73e8"/><path d="M1 13.500L2.200 9L6 12Z" fill="#1a73e8"/><path d="M5 5.300H11M5 7.800H9" stroke="#fff" stroke-width="1"/></svg>
  <svg style="left:1480.500px;top:373px;width:24.500px;height:21.500px" viewBox="0 0 24 24" preserveAspectRatio="none"><path d="M14.31 19.66 L14.40 22.32 L9.60 22.32 L9.69 19.66 L6.52 17.83 L4.26 19.24 L1.86 15.08 L4.21 13.83 L4.21 10.17 L1.86 8.92 L4.26 4.76 L6.52 6.17 L9.69 4.34 L9.60 1.68 L14.40 1.68 L14.31 4.34 L17.48 6.17 L19.74 4.76 L22.14 8.92 L19.79 10.17 L19.79 13.83 L22.14 15.08 L19.74 19.24 L17.48 17.83Z" fill="none" stroke="#1b1b1b" stroke-width="1.900" stroke-linejoin="round"/><circle cx="12" cy="12" r="2.900" fill="none" stroke="#1b1b1b" stroke-width="1.800"/></svg>
  <svg style="left:1527.500px;top:374px;width:24.500px;height:20.500px" viewBox="0 0 24.500 20.500" preserveAspectRatio="none"><g fill="none" stroke="#1b1b1b" stroke-width="1.500" stroke-linejoin="round"><ellipse cx="7.800" cy="8.800" rx="3.400" ry="3"/><path d="M1 14.500H14.600c0 3-2.800 5.200-6.800 5.200S1 17.500 1 14.500Z"/><path d="M13.500 7.500V2.500a1.700 1.700 0 0 1 1.700-1.700H22a1.700 1.700 0 0 1 1.700 1.700V6a1.700 1.700 0 0 1-1.700 1.700H18L15.300 10V7.700Z"/></g></svg>
  <svg style="left:1571.500px;top:381.500px;width:22.500px;height:4px" viewBox="0 0 22.500 4" preserveAspectRatio="none"><g fill="#1b1b1b"><ellipse cx="1.800" cy="2" rx="1.600" ry="1.400"/><ellipse cx="11.250" cy="2" rx="1.600" ry="1.400"/><ellipse cx="20.700" cy="2" rx="1.600" ry="1.400"/></g></svg>
  <svg style="left:1613.500px;top:376.500px;width:17px;height:15px" viewBox="0 0 17 15" preserveAspectRatio="none"><path d="M0.500 0.500L16.500 14.500M16.500 0.500L0.500 14.500" stroke="#1b1b1b" stroke-width="1.500"/></svg>
  <!-- ===== icons: devtools row 2 ===== -->
  <svg style="left:1019.300px;top:416.200px;width:23.400px;height:15px" viewBox="0 0 23 14.500" preserveAspectRatio="none"><rect x="0.800" y="0.800" width="21.400" height="12.900" rx="2" fill="none" stroke="#1b1b1b" stroke-width="1.500"/><path d="M0.800 2.800a2 2 0 0 1 2-2H8V13.700H2.800a2 2 0 0 1-2-2Z" fill="#1b1b1b"/><path d="M12.500 5L10.500 7.250L12.500 9.500M10.700 7.250H16" fill="none" stroke="#1b1b1b" stroke-width="1.100"/></svg>
  <svg style="left:1065.400px;top:414.400px;width:24.500px;height:20.400px" viewBox="0 0 24.500 22.500" preserveAspectRatio="none"><ellipse cx="12.250" cy="11.250" rx="11.400" ry="10.400" fill="none" stroke="#1b1b1b" stroke-width="1.500"/><path d="M4.200 18.500L20.300 4" stroke="#1b1b1b" stroke-width="1.500"/></svg>
  <svg style="left:1148px;top:420px;width:12.500px;height:8px" viewBox="0 0 12.500 8" preserveAspectRatio="none"><path d="M0.500 0.300H12Q12.400 0.600 12 1L6.700 7.700Q6.250 8 5.800 7.700L0.500 1Q0.100 0.600 0.500 0.300Z" fill="#1b1b1b"/></svg>
  <svg style="left:1185px;top:416.500px;width:22.500px;height:15.500px" viewBox="0 0 22.500 15.500" preserveAspectRatio="none"><g fill="none" stroke="#1b1b1b" stroke-width="1.500" stroke-linecap="round"><path d="M1 7.500C2.500 3.300 6.500 0.900 11.250 0.900S20 3.300 21.500 7.500"/><ellipse cx="11.250" cy="9.800" rx="4.300" ry="3.900"/></g></svg>
  <svg style="left:1553px;top:420px;width:13px;height:8px" viewBox="0 0 12.500 8" preserveAspectRatio="none"><path d="M0.500 0.300H12Q12.400 0.600 12 1L6.700 7.700Q6.250 8 5.800 7.700L0.500 1Q0.100 0.600 0.500 0.300Z" fill="#1b1b1b"/></svg>
  <svg style="left:1610px;top:413px;width:24px;height:21px" viewBox="0 0 24 24" preserveAspectRatio="none"><path d="M14.31 19.66 L14.40 22.32 L9.60 22.32 L9.69 19.66 L6.52 17.83 L4.26 19.24 L1.86 15.08 L4.21 13.83 L4.21 10.17 L1.86 8.92 L4.26 4.76 L6.52 6.17 L9.69 4.34 L9.60 1.68 L14.40 1.68 L14.31 4.34 L17.48 6.17 L19.74 4.76 L22.14 8.92 L19.79 10.17 L19.79 13.83 L22.14 15.08 L19.74 19.24 L17.48 17.83Z" fill="none" stroke="#1b1b1b" stroke-width="1.900" stroke-linejoin="round"/><circle cx="12" cy="12" r="2.900" fill="none" stroke="#1b1b1b" stroke-width="1.800"/></svg>
  <!-- drawer icons -->
  <svg style="left:1234px;top:928px;width:22px;height:20px" viewBox="0 0 22 20" preserveAspectRatio="none"><path d="M11 0V20M0 10H22" stroke="#1b1b1b" stroke-width="1.500"/></svg>
  <svg style="left:1613px;top:931px;width:18px;height:16px" viewBox="0 0 18 16" preserveAspectRatio="none"><path d="M0.500 0.500L17.500 15.500M17.500 0.500L0.500 15.500" stroke="#1b1b1b" stroke-width="1.500"/></svg>
</div>
<!-- red ellipse annotation -->
<svg style="left:995px;top:405px;width:170px;height:120px" viewBox="995 405 170 120"><ellipse cx="1079.200" cy="464.400" rx="76.600" ry="49.700" fill="none" stroke="#ff0000" stroke-width="4" transform="rotate(2 1079.200 464.400)"/></svg>
<!-- /BROWSER -->
</body>
</html>
